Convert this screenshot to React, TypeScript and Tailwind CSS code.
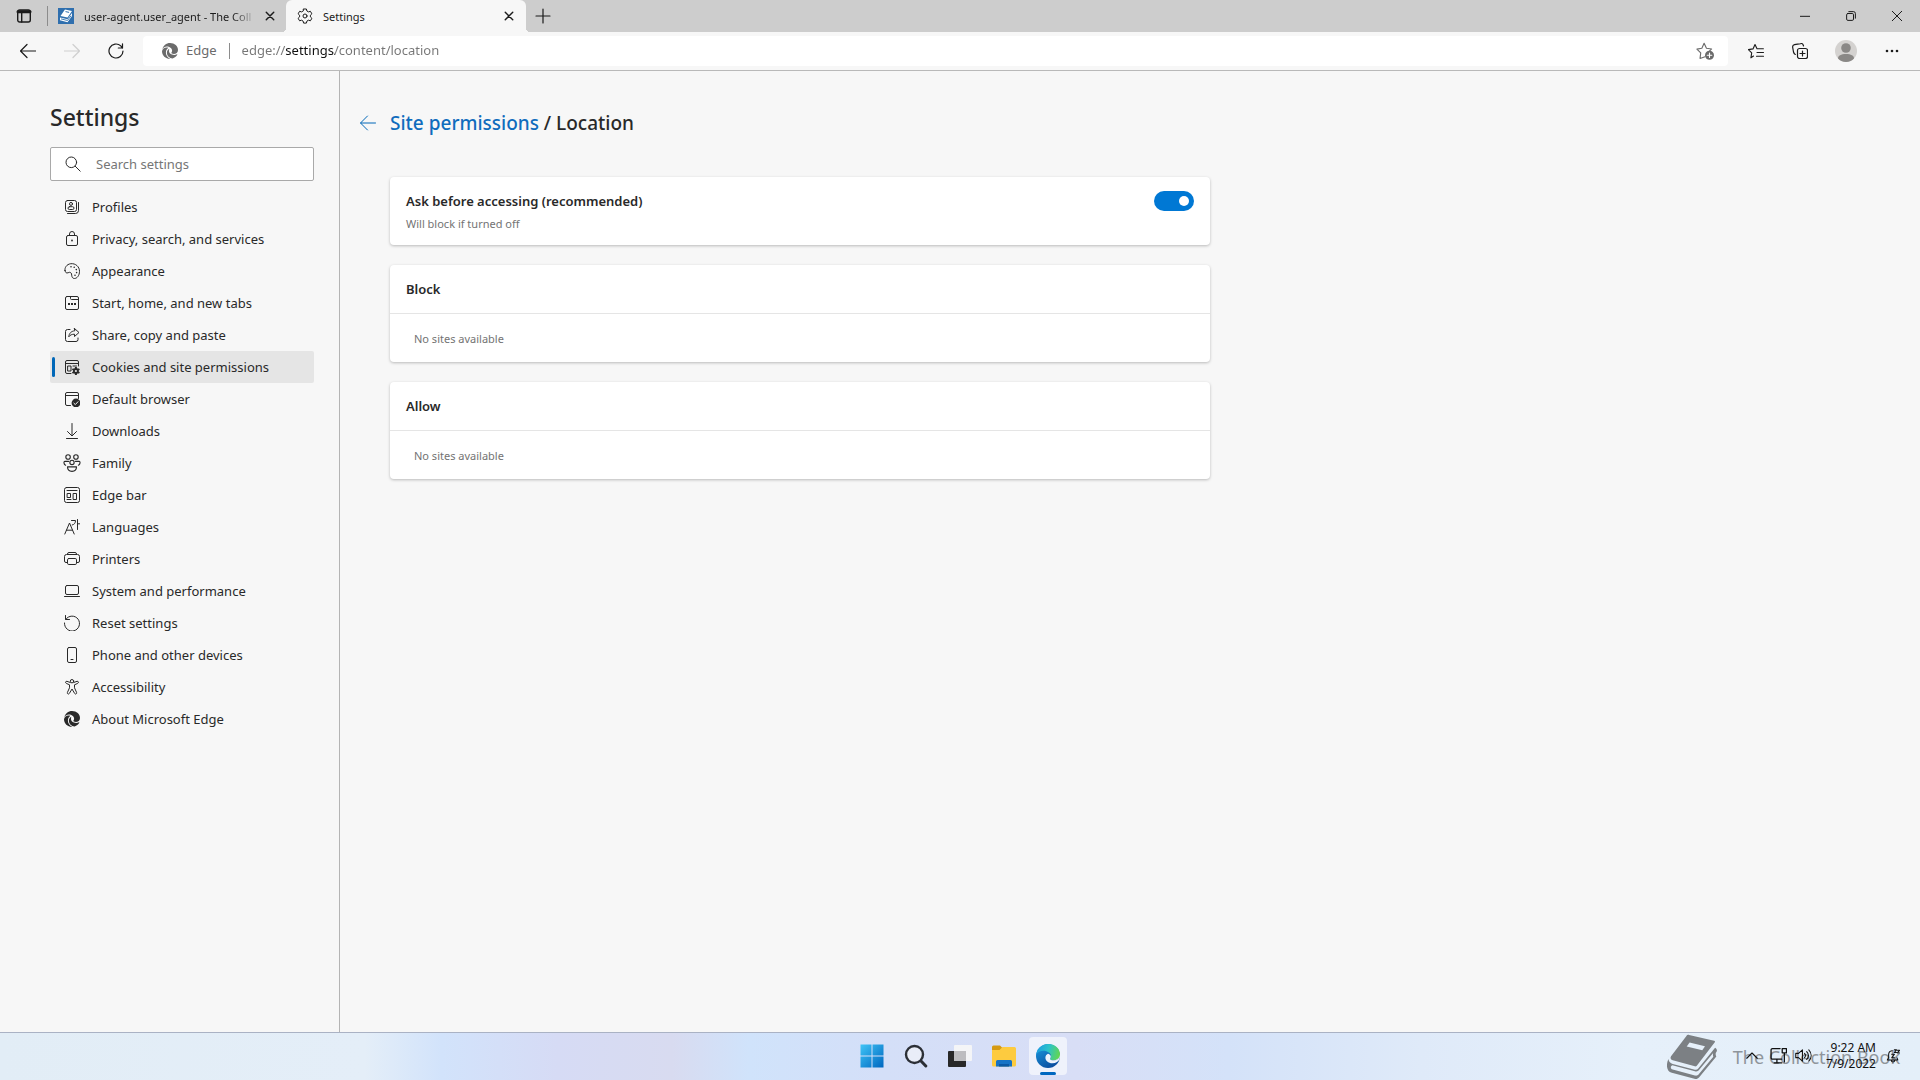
import { useState } from "react";
import type { ReactNode } from "react";

type IconProps = { children: ReactNode; className?: string };

function Icon({ children, className = "size-4" }: IconProps) {
  return (
    <svg
      viewBox="0 0 16 16"
      fill="none"
      stroke="currentColor"
      strokeLinecap="round"
      strokeLinejoin="round"
      className={`shrink-0 ${className}`}
      aria-hidden="true"
    >
      {children}
    </svg>
  );
}

function EdgeMono() {
  return (
    <Icon>
      <g fill="currentColor" stroke="none">
        <path d="M.3 6.200C1.200 2.600 4.300 0 8 0c4.600 0 8 3.200 8 6.900 0 2.400-1.900 4-4.100 4-2 0-2.900-.7-2.400-1.400.5-.7.6-1.300.6-1.900 0-2-2.500-4-5.400-4C3 3.600 1.300 4.600.3 6.200z" />
        <path d="M0 8.300C.3 6 2.200 4.500 4.500 4.500c.7 0 1.300.1 1.900.3C4.900 5.800 3.900 7.600 3.900 9.600c0 2.700 1.700 5 4.400 6.400C3.800 16.100 0 12.600 0 8.300z" />
        <path d="M7.200 5.800C5.700 6.700 4.900 8.200 4.900 9.800c0 3 2.500 5.600 5.700 5.600 2-.6 3.700-1.900 4.700-3.700.2-.4-.1-.6-.4-.4-.8.4-1.700.6-2.700.6-3 0-5.200-1.700-5.200-3.900 0-.8.3-1.500.2-2.200z" />
      </g>
    </Icon>
  );
}

const navItems: { label: string; icon: ReactNode }[] = [
  {
    label: "Profiles",
    icon: (
      <Icon>
        <rect x="1.500" y="1.500" width="11" height="11" rx="2" />
        <path d="M14.500 3.500v8a3 3 0 0 1-3 3h-8" />
        <circle cx="7" cy="4.900" r="1.500" />
        <rect x="4" y="7.700" width="6" height="2.800" rx="1.400" />
      </Icon>
    ),
  },
  {
    label: "Privacy, search, and services",
    icon: (
      <Icon>
        <rect x="2.500" y="4.500" width="11" height="10" rx="1.500" />
        <path d="M5.500 4.500V3a2.500 2.500 0 0 1 5 0v1.500" />
        <circle cx="8" cy="9.500" r=".9" fill="currentColor" stroke="none" />
      </Icon>
    ),
  },
  {
    label: "Appearance",
    icon: (
      <Icon>
        <path d="M1 7.500C.4 5 2.500 1.200 6.800.7c4.800-.5 8.700 3 8.700 7.600 0 4.300-2.600 7.200-5 7.200-2 0-2.700-1.600-2.800-3.300C7.600 10.500 7 9.200 5.500 9.300c-1.200.1-1.600.8-2.600.7C1.700 9.900 1.200 8.600 1 7.500z" />
        <g fill="currentColor" stroke="none">
          <circle cx="7" cy="3.700" r=".8" />
          <circle cx="10.200" cy="4.300" r=".8" />
          <circle cx="12.300" cy="6.600" r=".8" />
          <circle cx="12.600" cy="9.600" r=".8" />
          <circle cx="11" cy="12.300" r=".8" />
        </g>
      </Icon>
    ),
  },
  {
    label: "Start, home, and new tabs",
    icon: (
      <Icon>
        <rect x="1.500" y="1.500" width="13" height="13" rx="1.500" />
        <path d="M6.500 1.500v2a1 1 0 0 0 1 1h7" />
        <g fill="currentColor" stroke="none">
          <rect x="4" y="8" width="2" height="2" />
          <rect x="7" y="8" width="2" height="2" />
          <rect x="10" y="8" width="2" height="2" />
        </g>
      </Icon>
    ),
  },
  {
    label: "Share, copy and paste",
    icon: (
      <Icon>
        <path d="M6 2.500H3.500a2 2 0 0 0-2 2v8a2 2 0 0 0 2 2h8.500a2 2 0 0 0 2-2V11" />
        <path d="M10.500 1.500 15 5.500l-4.500 4V7.200c-2.600 0-4.500.8-5.700 2.600.3-3.300 2-5.500 5.700-6z" />
      </Icon>
    ),
  },
  {
    label: "Cookies and site permissions",
    icon: (
      <Icon>
        <path d="M7 14.500H3a1.500 1.500 0 0 1-1.500-1.500V3A1.500 1.500 0 0 1 3 1.500h10A1.500 1.500 0 0 1 14.500 3v4" />
        <path d="M1.500 4.500h13M4 7h3v5H4zM9 7h3.500" />
        <circle cx="11.900" cy="12" r="2.900" stroke="none" fill="currentColor" />
        <path d="M11.900 8v8M8.400 10l7 4M15.400 10l-7 4" strokeWidth="2" strokeLinecap="butt" />
        <circle cx="11.900" cy="12" r="1.100" fill="#e5e5e5" stroke="none" />
      </Icon>
    ),
  },
  {
    label: "Default browser",
    icon: (
      <Icon>
        <path d="M6.500 14.500H3A1.500 1.500 0 0 1 1.500 13V3A1.500 1.500 0 0 1 3 1.500h10A1.500 1.500 0 0 1 14.500 3v4.500M1.500 4.500h13" />
        <circle cx="12" cy="12" r="4.400" fill="currentColor" stroke="none" />
        <path d="m9.900 12.200 1.400 1.400 2.700-2.900" stroke="#f7f7f7" />
      </Icon>
    ),
  },
  {
    label: "Downloads",
    icon: (
      <Icon>
        <path d="M8 .5v12M3.500 8.500 8 13l4.500-4.500M2.500 15.500h11" />
      </Icon>
    ),
  },
  {
    label: "Family",
    icon: (
      <Icon className="size-[18px] -mx-px">
        <circle cx="4.500" cy="2.700" r="2" />
        <circle cx="11.500" cy="2.700" r="2" />
        <circle cx="8" cy="7.500" r="1.900" />
        <path d="M5 6.500H1.700C.5 6.500.5 9 2.300 10M11 6.500h3.300c1.200 0 1.200 2.500-.6 3.500" />
        <path d="M4 11.400h8c0 2.400-1.600 4-4 4s-4-1.600-4-4z" />
      </Icon>
    ),
  },
  {
    label: "Edge bar",
    icon: (
      <Icon>
        <rect x=".5" y=".5" width="15" height="15" rx="2" />
        <path d="M3 3.500h10M3.500 6.500h3v4h-3zM9.500 6.500h3v6h-3zM3 12.500h4" />
      </Icon>
    ),
  },
  {
    label: "Languages",
    icon: (
      <Icon>
        <path d="m.8 15 4.700-11 4.700 11M2.500 11.200h6M7.500 1.500h4c0 2.700-1.200 4-3.300 4.500M13.500.5v10M13.500 4.800h2.200" />
      </Icon>
    ),
  },
  {
    label: "Printers",
    icon: (
      <Icon>
        <path d="M3.500 11.500H2A1.500 1.500 0 0 1 .5 10V5.500a2 2 0 0 1 2-2h11a2 2 0 0 1 2 2V10a1.500 1.500 0 0 1-1.500 1.500h-1.500" />
        <path d="M3.500 3.500V3A1.500 1.500 0 0 1 5 1.500h6A1.500 1.500 0 0 1 12.500 3v.5" />
        <rect x="3.500" y="7.500" width="9" height="6" rx="1.300" />
      </Icon>
    ),
  },
  {
    label: "System and performance",
    icon: (
      <Icon>
        <rect x="1.500" y="2.500" width="13" height="9" rx="1.500" />
        <path d="M.5 13.500h15" />
      </Icon>
    ),
  },
  {
    label: "Reset settings",
    icon: (
      <Icon>
        <path d="M1.500.5v4h4M1.800 4.300A7.500 7.500 0 1 1 .5 8" />
      </Icon>
    ),
  },
  {
    label: "Phone and other devices",
    icon: (
      <Icon>
        <rect x="3.500" y=".5" width="9" height="15" rx="1.500" />
        <path d="M7 12.500h2" />
      </Icon>
    ),
  },
  {
    label: "Accessibility",
    icon: (
      <Icon>
        <circle cx="8" cy="2.200" r="1.700" />
        <path d="M6.200 3.500 3 2.300c-1.500-.4-2 1.500-.7 2.100L5.500 5.800v3L3.400 13.500c-.5 1.400 1.300 2.200 2 .9L8 10l2.600 4.400c.7 1.300 2.500.5 2-.9L10.500 8.800v-3l3.200-1.400c1.300-.6.8-2.500-.7-2.100L9.800 3.500" />
      </Icon>
    ),
  },
  { label: "About Microsoft Edge", icon: <EdgeMono /> },
];

function BookLogo({ className }: { className: string }) {
  return (
    <svg viewBox="0 0 52 46" className={className} fill="currentColor" aria-hidden="true">
      <path d="M23 0 49 6c1 .3 1.200 1 .7 1.700L31 32c-.6.700-1.200.900-2 .7L6 26.500C4 26 3 24 4.200 22.200L20 1.500C20.800.3 21.800-.2 23 0z" />
      <path d="M1.500 25C2 28 3.500 29.500 6 30.200l23 6c1.500.4 2.500 0 3.500-1.200L50 13.500c1.600 1 2.200 2.200 1.800 3.500l-1 1.500c-.5 2 0 3 .5 4L33.500 44c-1.400 1.700-3 2.200-5 1.700L5 39.500C-.5 38-1.300 31 1.500 25z" />
      <path d="M5.500 31.500 29 37.800c2 .5 3.300 0 4.500-1.500L48 18.800c-.4 1.500-.3 3 .2 4L33 41c-1.200 1.400-2.500 1.700-4 1.300L6 36c-2.500-.7-2.600-3.500-.5-4.500z" fill="#e6f0fa" />
      <path d="m23.500 8 16 3.700-2.800 4.300-16.200-4z" fill="#e6f0fa" />
    </svg>
  );
}

function CloseIcon() {
  return (
    <Icon className="size-3">
      <path d="M3 3l10 10M13 3 3 13" strokeWidth="1.900" />
    </Icon>
  );
}

function TabBar() {
  return (
    <header className="flex h-8 shrink-0 items-stretch bg-[#cdcdcd] text-[11px] text-[#1b1b1b]">
      <button aria-label="Tab actions menu" className="flex w-[47px] items-center justify-center">
        <Icon>
          <rect x="1.700" y="2" width="12.600" height="12" rx="2" strokeWidth="1.400" />
          <path d="M2 3.800h12" strokeWidth="3" />
          <path d="M5.700 4v10" strokeWidth="1.400" />
        </Icon>
      </button>
      <div className="my-1.5 w-px bg-[#8c8c8c]" />
      <div className="flex w-[238px] items-center pl-2.5">
        <span className="flex size-4 shrink-0 items-center justify-center bg-[#2f6fae] text-white">
          <svg viewBox="0 0 16 16" className="size-4" aria-hidden="true">
            <path d="M7 1.500 14 3 9.500 9.500 2.500 8z" fill="#fff" />
            <path d="M2 9.500 9.500 11.200 14 5v3l-4.500 6.200L2 12.300z" fill="#fff" />
            <path d="M3 10.900 9.500 12.500 13 7.800" stroke="#2f6fae" fill="none" strokeWidth=".9" />
            <path d="m7.500 3.600 3.600.8" stroke="#2f6fae" />
          </svg>
        </span>
        <span className="ml-2.5 w-[172px] pt-0.5 whitespace-nowrap mask-r-from-86% mask-r-to-100%">
          user-agent.user_agent - The Coll
        </span>
        <button aria-label="Close tab" className="flex w-7 items-center justify-center">
          <CloseIcon />
        </button>
      </div>
      <div className="relative flex w-[240px] items-center rounded-t-md bg-[#f7f7f7] pl-[11px] before:absolute before:bottom-0 before:-left-1 before:size-1 before:bg-[radial-gradient(circle_at_0_0,transparent_4px,#f7f7f7_4px)] after:absolute after:bottom-0 after:-right-1 after:size-1 after:bg-[radial-gradient(circle_at_100%_0,transparent_4px,#f7f7f7_4px)]">
        <Icon>
          <path d="M6.600 1h2.800l.5 2 1.500.9 2-.6 1.500 2.500L13.400 7.200v1.700l1.500 1.400-1.500 2.500-2-.6-1.500.9-.5 2H6.600l-.5-2-1.500-.9-2 .6-1.500-2.500 1.500-1.400V7.200L1.100 5.800l1.500-2.500 2 .6L6.100 3z" />
          <circle cx="8" cy="8" r="2" />
        </Icon>
        <span className="ml-2.5 flex-1 pt-0.5">Settings</span>
        <button aria-label="Close tab" className="flex w-[34px] items-center justify-center">
          <CloseIcon />
        </button>
      </div>
      <button aria-label="New tab" className="flex w-[34px] items-center justify-center">
        <Icon>
          <path d="M8 1v14M1 8h14" strokeWidth="1.200" />
        </Icon>
      </button>
      <div className="ml-auto flex">
        <button aria-label="Minimize" className="flex w-[46px] items-center justify-center">
          <Icon className="size-2.5">
            <path d="M0 8.500h16" strokeWidth="1.600" />
          </Icon>
        </button>
        <button aria-label="Restore" className="flex w-[46px] items-center justify-center">
          <Icon className="size-2.5">
            <rect x="1" y="4" width="11" height="11" rx="2" strokeWidth="1.600" />
            <path d="M4.500 1H12a3 3 0 0 1 3 3v7.500" strokeWidth="1.600" />
          </Icon>
        </button>
        <button aria-label="Close" className="flex w-[46px] items-center justify-center">
          <Icon className="size-2.5">
            <path d="M0 0l16 16M16 0 0 16" strokeWidth="1.600" />
          </Icon>
        </button>
      </div>
    </header>
  );
}

function Toolbar() {
  return (
    <div className="flex h-[39px] shrink-0 items-center border-b border-[#b9b9b9] bg-[#f7f7f7] text-[#1b1b1b]">
      <div className="flex w-[143px] items-center pl-1.5">
        <button aria-label="Back" className="flex w-11 justify-center">
          <Icon>
            <path d="M15.500 8H.8M7 1.500.5 8 7 14.500" strokeWidth="1.200" />
          </Icon>
        </button>
        <button aria-label="Forward" disabled className="flex w-11 justify-center text-[#cfcfcf]">
          <Icon>
            <path d="M.5 8h14.700M9 1.500 15.500 8 9 14.500" strokeWidth="1.200" />
          </Icon>
        </button>
        <button aria-label="Refresh" className="flex w-11 justify-center">
          <Icon>
            <path d="M15 8a7 7 0 1 1-2.200-5.100L14.500 5M14.500.8V5h-4.200" strokeWidth="1.200" />
          </Icon>
        </button>
      </div>
      <div className="flex h-[30px] flex-1 items-center rounded-sm bg-white pl-[19px] text-[13px] text-[#6b6b6b]">
        <EdgeMono />
        <span className="ml-2">Edge</span>
        <span className="ml-3 h-4 w-px bg-[#8c8c8c]" />
        <input
          aria-label="Address and search bar"
          defaultValue="edge://settings/content/location"
          className="ml-3 min-w-0 flex-1 bg-[linear-gradient(90deg,#767676_44px,#111111_44px,#111111_93px,#767676_93px)] bg-clip-text text-transparent outline-none"
        />
        <button aria-label="Add to favorites" className="mr-3.5">
          <Icon className="size-[18px]">
            <path d="M8 13.100 3.600 14.600l.6-4.900L.8 6.300l4.400-.8L7.200 1.200l2.100 4.300 4.600.7-2 2" />
            <circle cx="12" cy="11.800" r="4" fill="currentColor" stroke="none" />
            <path d="M12 9.800v4M10 11.800h4" stroke="#fff" />
          </Icon>
        </button>
      </div>
      <div className="flex w-[192px] items-center pl-5">
        <button aria-label="Favorites">
          <Icon>
            <path d="M5.500 13 2.900 14.800l.8-4.900L.4 6.600 5 5.900 7 1.500l2 4.300h6.400M9 9.500h6.500M8.500 13.200h7" strokeWidth="1.100" />
          </Icon>
        </button>
        <button aria-label="Collections" className="ml-7">
          <Icon>
            <rect x="5.500" y="5.500" width="10" height="10" rx="2" strokeWidth="1.200" />
            <path d="M10.500 8v5M8 10.500h5M3.300 11.500C2.200 11 1.800 10.300 1.500 9L.7 4.500C.4 3 1 2 2.500 1.700L8.500.6c1.400-.3 2.400.3 2.800 1.600l.2.800" strokeWidth="1.200" />
          </Icon>
        </button>
        <button aria-label="Profile" className="ml-[27px]">
          <svg viewBox="0 0 22 22" className="size-[22px]" aria-hidden="true">
            <circle cx="11" cy="11" r="11" fill="#d4d2d0" />
            <circle cx="11" cy="8" r="4.800" fill="#8a8886" />
            <path d="M3 18.500c0-3 3-4.500 8-4.500s8 1.500 8 4.500c-2 2.200-4.600 3.500-8 3.500s-6-1.300-8-3.500z" fill="#8a8886" />
          </svg>
        </button>
        <button aria-label="Settings and more" className="ml-[27px]">
          <Icon>
            <g fill="currentColor" stroke="none">
              <circle cx="3" cy="8" r="1.300" />
              <circle cx="8" cy="8" r="1.300" />
              <circle cx="13" cy="8" r="1.300" />
            </g>
          </Icon>
        </button>
      </div>
    </div>
  );
}

function Sidebar() {
  return (
    <aside className="w-[340px] shrink-0 border-r border-[#b4b4b4] pt-[30px] pr-[25px] pl-[50px]">
      <h1 className="text-[23px] leading-8 font-medium">Settings</h1>
      <div className="mt-3.5 flex h-[34px] items-center rounded-xs border border-[#a9a9a9] bg-white pl-[14px]">
        <Icon>
          <circle cx="6.300" cy="6.300" r="5.300" />
          <path d="m10.200 10.200 5 5" />
        </Icon>
        <input
          type="search"
          aria-label="Search settings"
          placeholder="Search settings"
          className="ml-[15px] min-w-0 flex-1 pt-0.5 text-[13px] outline-none placeholder:text-[#767676]"
        />
      </div>
      <nav className="mt-2.5">
        {navItems.map((item) => {
          const active = item.label === "Cookies and site permissions";
          return (
            <a
              key={item.label}
              href="#"
              aria-current={active ? "page" : undefined}
              className={`relative flex h-8 items-center gap-3 rounded-xs pl-3.5 text-[13px] ${active ? "bg-[#e5e5e5]" : ""}`}
            >
              {active && <span className="absolute left-0.5 h-5 w-[3px] rounded-full bg-[#0067b8]" />}
              {item.icon}
              <span className="pt-0.5">{item.label}</span>
            </a>
          );
        })}
      </nav>
    </aside>
  );
}

function SiteList({ title }: { title: string }) {
  return (
    <section className="rounded-sm bg-white shadow-[0_1px_3px_rgba(0,0,0,0.25)]">
      <h2 className="flex h-12 items-center px-4 pt-0.5 text-[13px] font-semibold">{title}</h2>
      <p className="flex h-[49px] items-center border-t border-[#e5e5e5] px-6 pt-0.5 text-[11px] text-[#737373]">
        No sites available
      </p>
    </section>
  );
}

function Content() {
  const [ask, setAsk] = useState(true);
  return (
    <main className="flex-1 px-5 pt-9">
      <div className="flex items-center gap-3.5">
        <button aria-label="Back to site permissions" className="text-[#0067b8]">
          <Icon>
            <path d="M15.500 8H.8M7.500 1 .5 8l7 7" />
          </Icon>
        </button>
        <h2 className="text-[19px] leading-8 font-medium">
          <a href="#" className="text-[#0f6cbd]">Site permissions</a> / Location
        </h2>
      </div>
      <div className="mt-[38px] ml-[30px] flex max-w-[820px] flex-col gap-5">
        <section className="flex h-[68px] justify-between rounded-sm bg-white px-4 pt-3.5 shadow-[0_1px_3px_rgba(0,0,0,0.25)]">
          <div>
            <label htmlFor="ask" className="block text-[13px] leading-5 font-semibold">
              Ask before accessing (recommended)
            </label>
            <p className="mt-1 text-[11px] leading-[18px] text-[#737373]">Will block if turned off</p>
          </div>
          <input
            id="ask"
            type="checkbox"
            role="switch"
            checked={ask}
            onChange={(e) => setAsk(e.target.checked)}
            className="flex h-5 w-10 appearance-none items-center rounded-full bg-[#8a8a8a] px-[5px] before:size-2.5 before:rounded-full before:bg-white checked:justify-end checked:bg-[#0078d4]"
          />
        </section>
        <SiteList title="Block" />
        <SiteList title="Allow" />
      </div>
    </main>
  );
}

function Taskbar() {
  return (
    <footer className="relative grid h-12 shrink-0 grid-cols-[1fr_auto_1fr] items-center border-t border-[#aab2c4] bg-[linear-gradient(90deg,#e2edf6_0%,#e4eef8_19%,#d2e3fb_23%,#d6dbf5_29%,#d8dbf0_35%,#d0e3fb_39%,#d4dff8_46%,#d8def6_56%,#d4e2f9_64%,#dfeaf9_74%,#e6f0fa_85%,#e4eff9_100%)] pb-0.5">
      <div className="pointer-events-none absolute right-5 flex items-center gap-4 text-[#7c8084]">
        <BookLogo className="h-[46px] w-[50px]" />
        <span className="text-lg text-[#8f959b]">The Collection Book</span>
      </div>
      <div />
      <div className="flex items-center gap-1.5">
        <button aria-label="Start" className="flex size-[38px] items-center justify-center">
          <svg viewBox="0 0 24 24" className="size-6" aria-hidden="true">
            <defs>
              <linearGradient id="win" x1="0" y1="0" x2="1" y2="1">
                <stop offset="0" stopColor="#3fc4f6" />
                <stop offset="1" stopColor="#0067c0" />
              </linearGradient>
            </defs>
            <path d="M.5.500h11v11H.5zM12.500.500h11v11h-11zM.5 12.500h11v11H.5zM12.500 12.500h11v11h-11z" fill="url(#win)" />
          </svg>
        </button>
        <button aria-label="Search" className="flex size-[38px] items-center justify-center">
          <svg viewBox="0 0 24 24" className="size-6" aria-hidden="true">
            <circle cx="10.500" cy="10.500" r="8.500" fill="#e9edf8" stroke="#2b2f36" strokeWidth="2.400" />
            <path d="m17 17 4.800 5" stroke="#2b2f36" strokeWidth="3" strokeLinecap="round" />
          </svg>
        </button>
        <button aria-label="Task view" className="flex size-[38px] items-center justify-center">
          <svg viewBox="0 0 24 24" className="size-6" aria-hidden="true">
            <rect x="0" y="7" width="18" height="16" rx="1" fill="#282828" />
            <rect x="6" y="1" width="18" height="16" rx="1" fill="#f4f5f7" />
            <rect x="6" y="7" width="12" height="10" fill="#bdbdc0" />
          </svg>
        </button>
        <button aria-label="File Explorer" className="flex size-[38px] items-center justify-center">
          <svg viewBox="0 0 24 24" className="size-6" aria-hidden="true">
            <path d="M0 3a1.500 1.500 0 0 1 1.500-1.500h6.500L10.500 4v4H0z" fill="#d69a12" />
            <path d="M9 4.500 10.500 3H22.500A1.500 1.500 0 0 1 24 4.500V21a1.500 1.500 0 0 1-1.500 1.500h-21A1.500 1.500 0 0 1 0 21V6h7.500z" fill="#fdcb3f" />
            <path d="M4 22.500v-5A1.500 1.500 0 0 1 5.500 16h13a1.500 1.500 0 0 1 1.500 1.500v5z" fill="#1673c5" />
            <path d="M7 20h10v2.500H7z" fill="#0b59a4" />
          </svg>
        </button>
        <button aria-label="Microsoft Edge" className="relative flex size-[38px] items-center justify-center rounded-sm bg-white/60">
          <svg viewBox="0 0 24 24" className="size-6" aria-hidden="true">
            <defs>
              <linearGradient id="edgeTop" x1="0" y1=".3" x2="1" y2=".5">
                <stop offset="0" stopColor="#1b9de2" />
                <stop offset=".5" stopColor="#2cc3c9" />
                <stop offset="1" stopColor="#62d651" />
              </linearGradient>
              <linearGradient id="edgeBody" x1="0" y1="0" x2=".6" y2="1">
                <stop offset="0" stopColor="#1b9de2" />
                <stop offset="1" stopColor="#0b4fa0" />
              </linearGradient>
            </defs>
            <circle cx="12" cy="12" r="12" fill="url(#edgeBody)" />
            <path d="M24 10.300c0 3-.3 3.700-.4 4.700l-1-.7c-1.300 1.400-3.100 2-4.800 2z" fill="#eef3fc" />
            <path d="M.2 10.500C1.300 4.200 6.300 0 12.200 0 19 0 24 4.800 24 10.300c0 3.600-2.800 6-6.200 6-2.900 0-4.300-1-3.500-2.100 1.500-2.100.8-5.500-4-7C6 6.100 1.800 7.600.2 10.500z" fill="url(#edgeTop)" />
            <path d="M14.300 14.200c-.8 1.100.6 2.100 3.500 2.100 1.700 0 3.500-.6 4.800-2l1 .7c-1.200 2.400-3.600 4.200-7.100 4.200-4.400 0-7.100-2.600-7.100-5.500 0-2 1-3.300 2.600-4 2.400.5 3.600 2.700 2.300 4.500z" fill="#eef3fc" />
          </svg>
          <span className="absolute bottom-0 h-[3px] w-4 rounded-full bg-[#0067c0]" />
        </button>
      </div>
      <div className="relative flex items-center justify-end pr-5 text-[#111]">
        <button aria-label="Show hidden icons" className="mr-3">
          <Icon className="size-3">
            <path d="M1 11l7-7 7 7" strokeWidth="1.500" />
          </Icon>
        </button>
        <button aria-label="Network" className="mr-2">
          <Icon className="size-[17px]">
            <path d="M9.500 1.500H2.300A1.300 1.300 0 0 0 1 2.800v7.400a1.300 1.300 0 0 0 1.300 1.300H11M6.500 11.500v3M4 15h7" strokeWidth="1.200" />
            <path d="M11.500 1.500h4v4h-4zM13.500 5.500V14" strokeWidth="1.200" />
          </Icon>
        </button>
        <button aria-label="Volume" className="mr-2">
          <Icon className="size-[17px]">
            <path d="M.7 6v4h2.600L7 13.300V2.700L3.300 6z" />
            <path d="M9 6c1 1.200 1 2.800 0 4M11 4.300c2 2.200 2 5.200 0 7.400M13 2.700c2.900 3.200 2.900 7.400 0 10.600" />
          </Icon>
        </button>
        <button className="mr-2.5 w-14 text-right text-xs">
          9:22 AM
          <br />
          7/9/2022
        </button>
        <button aria-label="Notifications">
          <Icon className="size-[14px]">
            <path d="M7 2C4.300 2.300 3 4.300 3 6.500V10l-1.500 2.500h12L12.500 10M6 13c.3 2.500 3.700 2.500 4 0M9.500 1H12L9.500 4H12M13 1.500h2.500L13 4.500h2.500M6.500 6h3.200l-3.200 4h3.200" strokeWidth="1.200" />
          </Icon>
        </button>
      </div>
    </footer>
  );
}

export default function App() {
  return (
    <div className="flex h-screen flex-col bg-[#f7f7f7] font-['Noto_Sans','Open_Sans',sans-serif] text-[#292929]">
      <TabBar />
      <Toolbar />
      <div className="flex min-h-0 flex-1">
        <Sidebar />
        <Content />
      </div>
      <Taskbar />
    </div>
  );
}
